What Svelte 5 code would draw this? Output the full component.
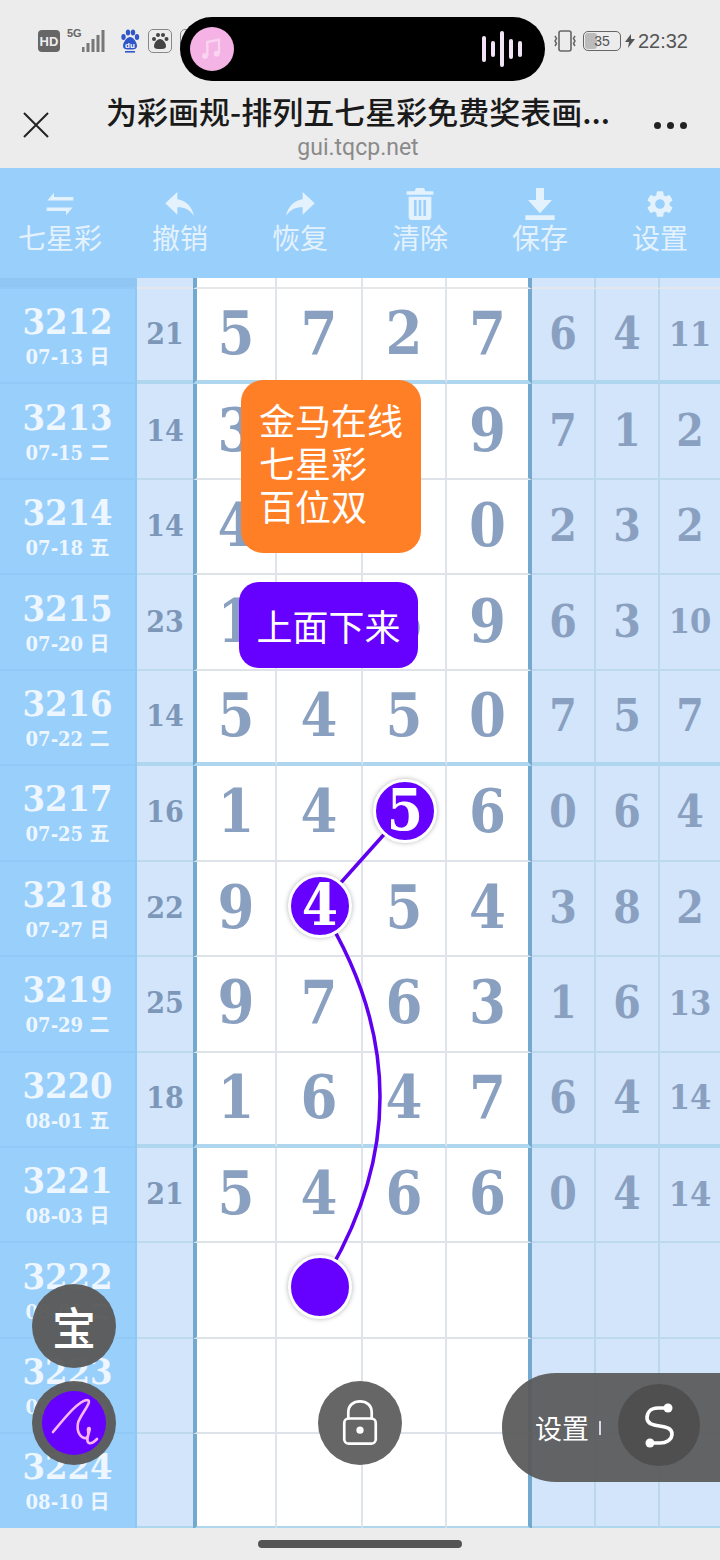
<script>
  const rows = [
    ['3212','07-13 日','21',['5','7','2','7'],['6','4','11']],
    ['3213','07-15 二','14',['3','1','1','9'],['7','1','2']],
    ['3214','07-18 五','14',['4','5','5','0'],['2','3','2']],
    ['3215','07-20 日','23',['1','7','6','9'],['6','3','10']],
    ['3216','07-22 二','14',['5','4','5','0'],['7','5','7']],
    ['3217','07-25 五','16',['1','4','5','6'],['0','6','4']],
    ['3218','07-27 日','22',['9','4','5','4'],['3','8','2']],
    ['3219','07-29 二','25',['9','7','6','3'],['1','6','13']],
    ['3220','08-01 五','18',['1','6','4','7'],['6','4','14']],
    ['3221','08-03 日','21',['5','4','6','6'],['0','4','14']],
    ['3222','08-05 二','',['','','',''],['','','']],
    ['3223','08-08 五','',['','','',''],['','','']],
    ['3224','08-10 日','',['','','',''],['','','']],
  ];
  const tools = [
    { label: '七星彩', icon: 'swap' },
    { label: '撤销', icon: 'undo' },
    { label: '恢复', icon: 'redo' },
    { label: '清除', icon: 'trash' },
    { label: '保存', icon: 'save' },
    { label: '设置', icon: 'gear' },
  ];
  const bars = [26, 16, 36, 20, 16];
</script>

<div class="page">
  <header class="status">
    <div class="status-left">
      <span class="hd">HD</span>
      <span class="net"><span class="g5">5G</span></span>
      <svg class="signal" viewBox="0 0 24 24" width="24" height="24">
        <path d="M1 24v-5M6 24v-9M11 24v-13M16 24v-17M21 24v-22" stroke="#777" stroke-width="3" />
      </svg>
      <svg class="paw" viewBox="0 0 20 24" width="20" height="24">
        <g fill="#2f55c8">
          <ellipse cx="3.500" cy="8" rx="2.200" ry="3" />
          <ellipse cx="8" cy="3.500" rx="2.200" ry="3" />
          <ellipse cx="13" cy="3.500" rx="2.200" ry="3" />
          <ellipse cx="17" cy="8" rx="2.200" ry="3" />
          <path d="M10 8c3 0 7 5 7 9 0 3-3 3.500-7 3.500S3 20 3 17c0-4 4-9 7-9z" />
          <rect x="5" y="22" width="10" height="1.600" />
        </g>
        <text x="10" y="18.500" class="du">du</text>
      </svg>
      <span class="app-box">
        <svg viewBox="0 0 20 20" width="20" height="20">
          <g fill="#444">
            <circle cx="4" cy="8" r="2" /><circle cx="8" cy="4" r="2" /><circle cx="13" cy="4" r="2" /><circle cx="16.500" cy="8" r="2" />
            <path d="M10 8c3 0 6 4 6 7 0 3-3 3-6 3s-6 0-6-3c0-3 3-7 6-7z" />
          </g>
        </svg>
      </span>
      <span class="app-box clip"></span>
    </div>
    <div class="status-right">
      <svg viewBox="0 0 24 24" width="24" height="24" class="rot">
        <rect x="6" y="2" width="12" height="20" rx="2" fill="none" stroke="#666" stroke-width="1.600" />
        <path d="M2 7l1.500 2.500L2 12l1.500 2.500L2 17M22 7l-1.500 2.500L22 12l-1.500 2.500L22 17" fill="none" stroke="#666" stroke-width="1.500" />
      </svg>
      <span class="battery"><span class="level"></span><span class="pct">35</span></span>
      <svg viewBox="0 0 10 14" width="10" height="14"><path d="M6 0L0 8h4l-1 6 7-9H6z" fill="#555" /></svg>
      <span class="time">22:32</span>
    </div>
  </header>

  <nav class="nav">
    <svg class="close" viewBox="0 0 28 28" width="28" height="28">
      <path d="M2 2l24 24M26 2L2 26" stroke="#222" stroke-width="2" />
    </svg>
    <div class="titles">
      <div class="title">为彩画规-排列五七星彩免费奖表画...</div>
      <div class="url">gui.tqcp.net</div>
    </div>
    <div class="dots"><i></i><i></i><i></i></div>
  </nav>

  <section class="toolbar">
    {#each tools as t}
      <div class="tool">
        <svg viewBox="0 0 24 24" width="32" height="32">
          {#if t.icon === 'swap'}
            <path d="M7.500 3.500v3.300H22v2.600H2.500zM16.500 20.500v-3.300H2v-2.600h19.500z" fill="currentColor" />
          {:else if t.icon === 'undo'}
            <path d="M10 8.500V3L1 11.500l9 8.500v-5.600c5.500 0 9.500 1.800 12.500 6.600C21.500 15 17 9.500 10 8.500z" fill="currentColor" />
          {:else if t.icon === 'redo'}
            <path d="M14 8.500V3l9 8.500-9 8.500v-5.600c-5.500 0-9.500 1.800-12.500 6.600C2.500 15 7 9.500 14 8.500z" fill="currentColor" />
          {:else if t.icon === 'trash'}
            <path fill-rule="evenodd" d="M9 0h6l1 2.500h6V5H2V2.500h6zM3.500 6.500h17V22c0 1-.8 2-2 2h-13c-1.200 0-2-1-2-2zM7.500 9v12h2V9zM11 9v12h2V9zM14.500 9v12h2V9z" fill="currentColor" />
          {:else if t.icon === 'save'}
            <path d="M9 0h6v9h6l-9 10L3 9h6zM1 20.500h22V25H1z" fill="currentColor" />
          {:else}
            <path d="M19.140 12.940c.04-.3.06-.61.06-.94 0-.32-.02-.64-.07-.94l2.030-1.580c.18-.14.23-.41.12-.61l-1.920-3.320c-.12-.22-.37-.29-.59-.22l-2.390.96c-.5-.38-1.030-.7-1.620-.94l-.36-2.540c-.04-.24-.24-.41-.48-.41h-3.840c-.24 0-.43.17-.47.41l-.36 2.540c-.59.24-1.130.57-1.620.94l-2.390-.96c-.22-.08-.47 0-.59.22L2.740 8.870c-.12.21-.08.47.12.61l2.030 1.580c-.05.3-.09.63-.09.94s.02.64.07.94l-2.030 1.580c-.18.14-.23.41-.12.61l1.920 3.320c.12.22.37.29.59.22l2.390-.96c.5.38 1.030.7 1.620.94l.36 2.540c.05.24.24.41.48.41h3.840c.24 0 .44-.17.47-.41l.36-2.540c.59-.24 1.130-.56 1.620-.94l2.390.96c.22.08.47 0 .59-.22l1.920-3.320c.12-.22.07-.47-.12-.61l-2.010-1.580zM12 15.600c-1.980 0-3.600-1.620-3.600-3.600s1.620-3.600 3.600-3.600 3.600 1.620 3.600 3.600-1.620 3.600-3.600 3.600z" fill="currentColor" />
          {/if}
        </svg>
        <span>{t.label}</span>
      </div>
    {/each}
  </section>

  <section class="table">
    <div class="row stub">
      <div class="c side"></div><div class="c sum"></div>
      <div class="c num first"></div><div class="c num"></div><div class="c num"></div><div class="c num last"></div>
      <div class="c ex"></div><div class="c ex"></div><div class="c ex"></div>
    </div>
    {#each rows as r, i}
      <div class="row" class:thick={i % 4 === 0}>
        <div class="c side"><b>{r[0]}</b><small>{r[1]}</small></div>
        <div class="c sum">{r[2]}</div>
        {#each r[3] as d, k}
          <div class="c num" class:first={k === 0} class:last={k === 3}>{d}</div>
        {/each}
        {#each r[4] as d}
          <div class="c ex" class:two={d.length > 1}>{d}</div>
        {/each}
      </div>
    {/each}
  </section>

  <footer class="bottom"><span class="home"></span></footer>

  <div class="island">
    <span class="album">
      <svg viewBox="0 0 24 24" width="28" height="28">
        <path d="M8 18V6l10-2v12" fill="none" stroke="#f8d4f2" stroke-width="2" />
        <circle cx="6" cy="18" r="2.500" fill="#f8d4f2" /><circle cx="16" cy="16" r="2.500" fill="#f8d4f2" />
      </svg>
    </span>
    <span class="wave">
      {#each bars as h}<i style="height:{h}px"></i>{/each}
    </span>
  </div>

  <svg class="draw" viewBox="0 0 720 1560" width="720" height="1560">
    <path d="M405 811L320 906" stroke="#6000f0" stroke-width="3.500" fill="none" />
    <path d="M320 906Q440 1097 320 1287" stroke="#6000f0" stroke-width="3.500" fill="none" />
  </svg>

  <div class="note orange">金马在线<br />七星彩<br />百位双</div>
  <div class="note purple">上面下来</div>

  <span class="ball b5">5</span>
  <span class="ball b4">4</span>
  <span class="ball b0"></span>

  <div class="fab bao">宝</div>
  <div class="fab pen">
    <span class="pen-in">
      <svg viewBox="0 0 64 64" width="64" height="64">
        <path d="M11 41C22 28 36 10 45 9 52 9 38 24 36 32 34 42 40 48 44 47 49 45 44 37 47 37 50 37 42 50 47 52 49 53 52 51 55 48" fill="none" stroke="#f7b6f2" stroke-width="2.600" stroke-linecap="round" />
      </svg>
    </span>
  </div>
  <div class="fab lock">
    <svg viewBox="0 0 40 52" width="36" height="48">
      <path d="M7 22V14C7 6 13 2 20 2s13 4 13 12v8" fill="none" stroke="#fff" stroke-width="3" />
      <rect x="2.500" y="21" width="35" height="28" rx="5" fill="none" stroke="#fff" stroke-width="3" />
      <circle cx="20" cy="34" r="4" fill="#fff" />
    </svg>
  </div>
  <div class="pill">
    <span class="pill-text">设置</span><i class="pill-sep"></i>
    <span class="pill-btn">
      <svg viewBox="0 0 82 82" width="82" height="82">
        <path d="M50 24H40C32 24 29 29 29 34 29 46 54 38 54 50 54 56 48 59 42 59H32" fill="none" stroke="#fff" stroke-width="3.600" stroke-linecap="round" />
        <circle cx="50" cy="24" r="4.500" fill="#fff" /><circle cx="32" cy="59" r="4.500" fill="#fff" />
      </svg>
    </span>
  </div>
</div>

<style>
  :global(body) { margin: 0; }
  .page {
    position: relative; width: 720px; height: 1560px; overflow: hidden;
    background: #ececec; font-family: "Noto Sans CJK SC", "Noto Sans", sans-serif;
    display: flex; flex-direction: column;
  }
  .status { height: 80px; padding: 28px 32px 0 38px; box-sizing: border-box; display: flex; justify-content: space-between; align-items: flex-start; flex: none; }
  .status-left, .status-right { display: flex; align-items: center; height: 26px; }
  .hd { width: 22px; height: 22px; background: #666; color: #eee; border-radius: 4px; font: 700 13px "Liberation Sans", sans-serif; display: flex; align-items: center; justify-content: center; }
  .net { width: 20px; height: 24px; position: relative; margin-left: 7px; }
  .g5 { font: 700 11px "Liberation Sans", sans-serif; color: #666; position: absolute; top: -2px; left: 0; }
  .signal { margin-left: -5px; margin-top: -2px; }
  .paw { margin-left: 14px; }
  .du { font: 700 8px "Liberation Sans", sans-serif; fill: #fff; text-anchor: middle; }
  .app-box { width: 22px; height: 22px; border: 1.500px solid #888; border-radius: 5px; margin-left: 8px; display: flex; align-items: center; justify-content: center; }
  .rot { margin-right: 6px; }
  .battery { position: relative; width: 36px; height: 18px; border: 1.500px solid #666; border-radius: 5px; margin-right: 4px; display: flex; align-items: center; justify-content: center; overflow: hidden; }
  .level { position: absolute; left: 1px; top: 1px; bottom: 1px; width: 12px; background: #bbb; border-radius: 3px; }
  .pct { position: relative; font: 400 14px "Liberation Sans", sans-serif; color: #555; }
  .time { font: 400 20px "Liberation Sans", sans-serif; color: #555; margin-left: 3px; }

  .nav { height: 88px; flex: none; position: relative; display: flex; justify-content: center; }
  .close { position: absolute; left: 22px; top: 31px; }
  .titles { width: 540px; text-align: center; margin-left: -4px; }
  .title { font-size: 31px; font-weight: 500; line-height: 40px; margin-top: 11px; color: #1a1a1a; white-space: nowrap; }
  .url { font: 400 23px "Roboto", sans-serif; color: #8a8a8a; line-height: 30px; margin-top: 2px; }
  .dots { position: absolute; left: 654px; top: 42px; display: flex; gap: 6px; }
  .dots i { width: 7px; height: 7px; background: #222; border-radius: 50%; }

  .toolbar { height: 110px; flex: none; background: #99cffb; display: grid; grid-template-columns: repeat(6, 120px); position: relative; z-index: 1; }
  .tool { display: flex; flex-direction: column; align-items: center; padding-top: 20px; color: #e4f2fe; }
  .tool span { font-size: 28px; line-height: 36px; margin-top: -1px; }

  .table { flex: none; height: 1250px; overflow: hidden; display: flex; flex-direction: column; }
  .row { flex: none; height: 95.440px; display: grid; grid-template-columns: 137px 56px 84px 86px 84px 85px 64px 64px 60px; box-sizing: border-box; }
  .row.stub { height: 11px; }
  .c { box-sizing: border-box; border-bottom: 2px solid #dde3e8; padding-bottom: 2px; display: flex; align-items: center; justify-content: center; font-family: "DejaVu Serif Condensed", "DejaVu Serif", serif; font-stretch: condensed; font-weight: 700; }
  .side { background: #99cffb; color: #eef7ff; flex-direction: column; border-bottom: 2px solid #92caf7; border-right: 2px solid #8fc8f5; padding: 0; }
  .side b { font-size: 36px; line-height: 40px; }
  .side small { font-size: 20px; line-height: 26px; font-family: "DejaVu Serif Condensed", "DejaVu Serif", "Noto Sans CJK SC", serif; font-weight: 700; margin-top: 3px; }
  .sum { background: #d2e5fb; color: #7d97b8; font-size: 30px; border-bottom-color: #bcd9ee; }
  .num { background: #fff; color: #8aa0c0; font-size: 59px; border-right: 2px solid #dfe4ea; }
  .num.first { border-left: 4px solid #74a9cf; }
  .num.last { border-right: 4px solid #74a9cf; }
  .ex { background: #d2e5fb; color: #8aa0c0; font-size: 44px; border-right: 2px solid #bcd6ec; border-bottom-color: #bcd9ee; }
  .ex:last-child { border-right: none; }
  .ex.two { font-size: 34px; }
  .row.thick .c { border-bottom: 4px solid #aed6ee; }
  .row.thick .side { border-bottom: 2px solid #92caf7; }
  .stub .c { border-bottom-color: #e5e7ea; }
  .stub .side { background: #8fc6f2; border-bottom-color: #92caf7; }

  .bottom { flex: 1; display: flex; justify-content: center; align-items: flex-start; padding-top: 12px; position: relative; z-index: 1; background: #ececec; }
  .home { width: 204px; height: 8px; background: #555; border-radius: 4px; }

  .island { position: absolute; left: 180px; top: 17px; width: 365px; height: 64px; background: #000; border-radius: 32px; display: flex; align-items: center; justify-content: space-between; padding: 0 23px 0 10px; box-sizing: border-box; z-index: 5; }
  .album { width: 44px; height: 44px; border-radius: 50%; background: linear-gradient(#f6b2e6, #f3b4e4); display: flex; align-items: center; justify-content: center; }
  .wave { display: flex; align-items: center; gap: 5px; }
  .wave i { width: 4px; background: #f3e3f6; border-radius: 2px; }

  .draw { position: absolute; left: 0; top: 0; pointer-events: none; }
  .note { position: absolute; color: #fff; font-size: 36px; box-sizing: border-box; }
  .orange { left: 241px; top: 380px; width: 180px; height: 173px; background: #ff7f27; border-radius: 22px; padding: 18px 0 0 18px; line-height: 43px; }
  .purple { left: 239px; top: 582px; width: 179px; height: 86px; background: #6600ff; border-radius: 20px; display: flex; align-items: center; justify-content: center; }
  .ball { position: absolute; width: 58px; height: 58px; margin: -32px 0 0 -32px; background: #6600ff; border: 3px solid #fff; box-shadow: 0 0 5px rgba(0,0,0,.3); border-radius: 50%; color: #fff; font-family: "DejaVu Serif Condensed", "DejaVu Serif", serif; font-stretch: condensed; font-weight: 700; font-size: 58px; line-height: 56px; text-align: center; }
  .b5 { left: 405px; top: 811px; }
  .b4 { left: 320px; top: 906px; }
  .b0 { left: 320px; top: 1287px; }

  .fab { position: absolute; width: 84px; height: 84px; border-radius: 50%; background: #666; color: #fff; display: flex; align-items: center; justify-content: center; }
  .bao { left: 32px; top: 1284px; font: 500 44px "Noto Sans CJK SC", sans-serif; background: rgba(90,90,90,.96); }
  .pen { left: 32px; top: 1381px; background: rgba(90,90,90,.96); }
  .pen-in { width: 64px; height: 64px; background: #6600ff; border-radius: 50%; display: block; }
  .lock { left: 318px; top: 1381px; }
  .pill { position: absolute; left: 502px; top: 1373px; width: 218px; height: 109px; background: rgba(90,90,90,.94); border-radius: 54px 0 0 54px; display: flex; align-items: center; color: #fff; padding-left: 33px; box-sizing: border-box; }
  .pill-text { font-size: 27px; }
  .pill-sep { width: 2px; height: 14px; background: #d8d8e8; margin-left: 10px; }
  .pill-btn { width: 82px; height: 82px; margin-left: 17px; margin-bottom: 5px; background: #4f4f4f; border-radius: 50%; display: block; }
  .pill-btn svg { display: block; }
</style>
